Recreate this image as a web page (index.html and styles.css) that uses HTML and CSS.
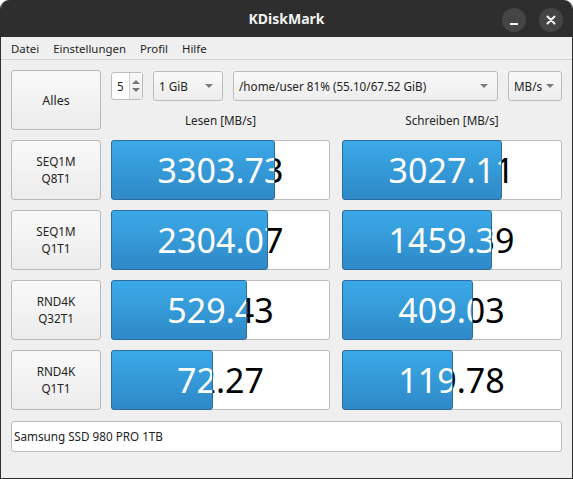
FILE: index.html
```html
<!DOCTYPE html>
<html lang="de">
<head>
    <meta charset="UTF-8">
    <title>KDiskMark</title>
    <link rel="stylesheet" href="styles.css">
</head>
<body>
    <div class="window">
        <div class="titlebar">
            <div class="title">KDiskMark</div>
            <div class="wm-buttons">
                <span class="wm-btn">
                    <svg width="24" height="24" viewBox="0 0 24 24"><rect x="8" y="15" width="8" height="2" fill="#f2f2f2"/></svg>
                </span>
                <span class="wm-btn">
                    <svg width="24" height="24" viewBox="0 0 24 24"><path d="M8.5 8.5 L15.5 15.5 M15.5 8.5 L8.5 15.5" stroke="#f2f2f2" stroke-width="2" stroke-linecap="round"/></svg>
                </span>
            </div>
        </div>

        <div class="menubar">
            <span class="menu-item">Datei</span>
            <span class="menu-item">Einstellungen</span>
            <span class="menu-item">Profil</span>
            <span class="menu-item">Hilfe</span>
        </div>

        <div class="content">
            <div class="grid">
                <div class="btn all">Alles</div>

                <div class="controls">
                    <div class="spin">
                        <span class="spin-value">5</span>
                        <span class="spin-arrows">
                            <span class="arrow-up"></span>
                            <span class="arrow-down"></span>
                        </span>
                    </div>
                    <div class="combo size">1 GiB <span class="caret"></span></div>
                    <div class="combo path">/home/user 81% (55.10/67.52 GiB) <span class="caret"></span></div>
                    <div class="combo unit">MB/s <span class="caret"></span></div>
                </div>

                <div class="col-label">Lesen [MB/s]</div>
                <div class="col-label write">Schreiben [MB/s]</div>

                <!-- SEQ1M Q8T1 -->
                <div class="btn test">SEQ1M<br>Q8T1</div>
                <div class="bar">
                    <span class="val">3303.73</span>
                    <div class="fill" style="width: 164px"><span class="val">3303.73</span></div>
                </div>
                <div class="bar write">
                    <span class="val">3027.11</span>
                    <div class="fill" style="width: 160px"><span class="val">3027.11</span></div>
                </div>

                <!-- SEQ1M Q1T1 -->
                <div class="btn test">SEQ1M<br>Q1T1</div>
                <div class="bar">
                    <span class="val">2304.07</span>
                    <div class="fill" style="width: 157px"><span class="val">2304.07</span></div>
                </div>
                <div class="bar write">
                    <span class="val">1459.39</span>
                    <div class="fill" style="width: 150px"><span class="val">1459.39</span></div>
                </div>

                <!-- RND4K Q32T1 -->
                <div class="btn test">RND4K<br>Q32T1</div>
                <div class="bar">
                    <span class="val">529.43</span>
                    <div class="fill" style="width: 136px"><span class="val">529.43</span></div>
                </div>
                <div class="bar write">
                    <span class="val">409.03</span>
                    <div class="fill" style="width: 131px"><span class="val">409.03</span></div>
                </div>

                <!-- RND4K Q1T1 -->
                <div class="btn test">RND4K<br>Q1T1</div>
                <div class="bar">
                    <span class="val">72.27</span>
                    <div class="fill" style="width: 102px"><span class="val">72.27</span></div>
                </div>
                <div class="bar write">
                    <span class="val">119.78</span>
                    <div class="fill" style="width: 111px"><span class="val">119.78</span></div>
                </div>
            </div>

            <div class="device">Samsung SSD 980 PRO 1TB</div>
        </div>
    </div>
</body>
</html>
```

FILE: styles.css
```css
* {
    box-sizing: border-box;
}

body {
    margin: 0;
    background-color: #ffffff;
    font-family: "Noto Sans", "Open Sans", sans-serif;
    font-size: 11.7px;
    color: #232323;
}

.window {
    width: 573px;
    height: 479px;
    background-color: #efefef;
    border: 1px solid #2e2e2e;
    border-top: none;
    border-radius: 9px 9px 0 0;
    overflow: hidden;
}

/* title bar */
.titlebar {
    height: 37px;
    background-color: #2e2e2e;
    display: flex;
    align-items: center;
    position: relative;
}

.title {
    flex: 1;
    text-align: center;
    color: #f2f2f2;
    font-weight: bold;
    font-size: 14px;
}

.wm-buttons {
    position: absolute;
    right: 9px;
    top: 8px;
    display: flex;
    gap: 13px;
}

.wm-btn {
    width: 24px;
    height: 24px;
    border-radius: 50%;
    background-color: #454545;
    display: block;
}

.wm-btn svg {
    display: block;
}

/* menu */
.menubar {
    height: 23px;
    display: flex;
    align-items: center;
    padding-left: 3px;
    border-bottom: 1px solid #d4d4d4;
    background-color: #efefef;
}

.menu-item {
    padding: 0 7px;
    font-size: 11.4px;
    color: #1f1f1f;
}

/* main area */
.content {
    padding: 10px 10px 0 10px;
}

.grid {
    display: grid;
    grid-template-columns: 90px 219px 1fr;
    grid-template-rows: 31px 19px 60px 60px 60px 60px;
    column-gap: 10px;
    row-gap: 10px;
}

.btn {
    background: linear-gradient(#f9f9f9, #ececec);
    border: 1px solid #b9b9b9;
    border-radius: 3px;
    display: flex;
    align-items: center;
    justify-content: center;
    text-align: center;
    line-height: 17px;
    color: #232323;
}

.all {
    grid-row: 1 / 3;
    font-size: 12.5px;
}

.controls {
    grid-column: 2 / 4;
    display: flex;
    align-items: center;
    gap: 10px;
}

.spin {
    width: 32px;
    height: 28px;
    background-color: #fff;
    border: 1px solid #bcbcbc;
    border-radius: 3px;
    display: flex;
}

.spin-value {
    flex: 1;
    padding-left: 5px;
    line-height: 26px;
}

.spin-arrows {
    width: 13px;
    border-left: 1px solid #d0d0d0;
    background: linear-gradient(#f8f8f8, #ececec);
    display: flex;
    flex-direction: column;
    align-items: center;
    justify-content: center;
    gap: 4px;
}

.arrow-up {
    border-left: 4px solid transparent;
    border-right: 4px solid transparent;
    border-bottom: 4px solid #777;
}

.arrow-down {
    border-left: 4px solid transparent;
    border-right: 4px solid transparent;
    border-top: 4px solid #777;
}

.combo {
    height: 30px;
    background: linear-gradient(#f9f9f9, #ededed);
    border: 1px solid #bcbcbc;
    border-radius: 3px;
    display: flex;
    align-items: center;
    justify-content: space-between;
    padding: 0 9px 0 5px;
    white-space: nowrap;
}

.size {
    width: 70px;
}

.path {
    flex: 1;
}

.unit {
    width: 54px;
    padding-right: 7px;
}

.caret {
    border-left: 4px solid transparent;
    border-right: 4px solid transparent;
    border-top: 4px solid #7a7a7a;
}

.col-label {
    text-align: center;
    line-height: 19px;
    color: #232323;
}

.col-label.write {
    margin-left: 2px;
}

/* result bars */
.bar {
    position: relative;
    background-color: #fff;
    border: 1px solid #bdbdbd;
    border-radius: 3px;
}

.bar.write {
    margin-left: 2px;
}

.bar .val {
    display: block;
    width: 217px;
    height: 58px;
    line-height: 58px;
    text-align: center;
    font-size: 34px;
    color: #000;
    white-space: nowrap;
}

.fill {
    position: absolute;
    left: -1px;
    top: -1px;
    bottom: -1px;
    overflow: hidden;
    background: linear-gradient(#3ba9e7, #2f89c8);
    border: 1px solid #2a6d9e;
    border-radius: 3px;
}

.fill .val {
    color: #fff;
}

.device {
    margin-top: 11px;
    height: 31px;
    background-color: #fff;
    border: 1px solid #bcbcbc;
    border-radius: 3px;
    padding-left: 2px;
    line-height: 29px;
}
```
